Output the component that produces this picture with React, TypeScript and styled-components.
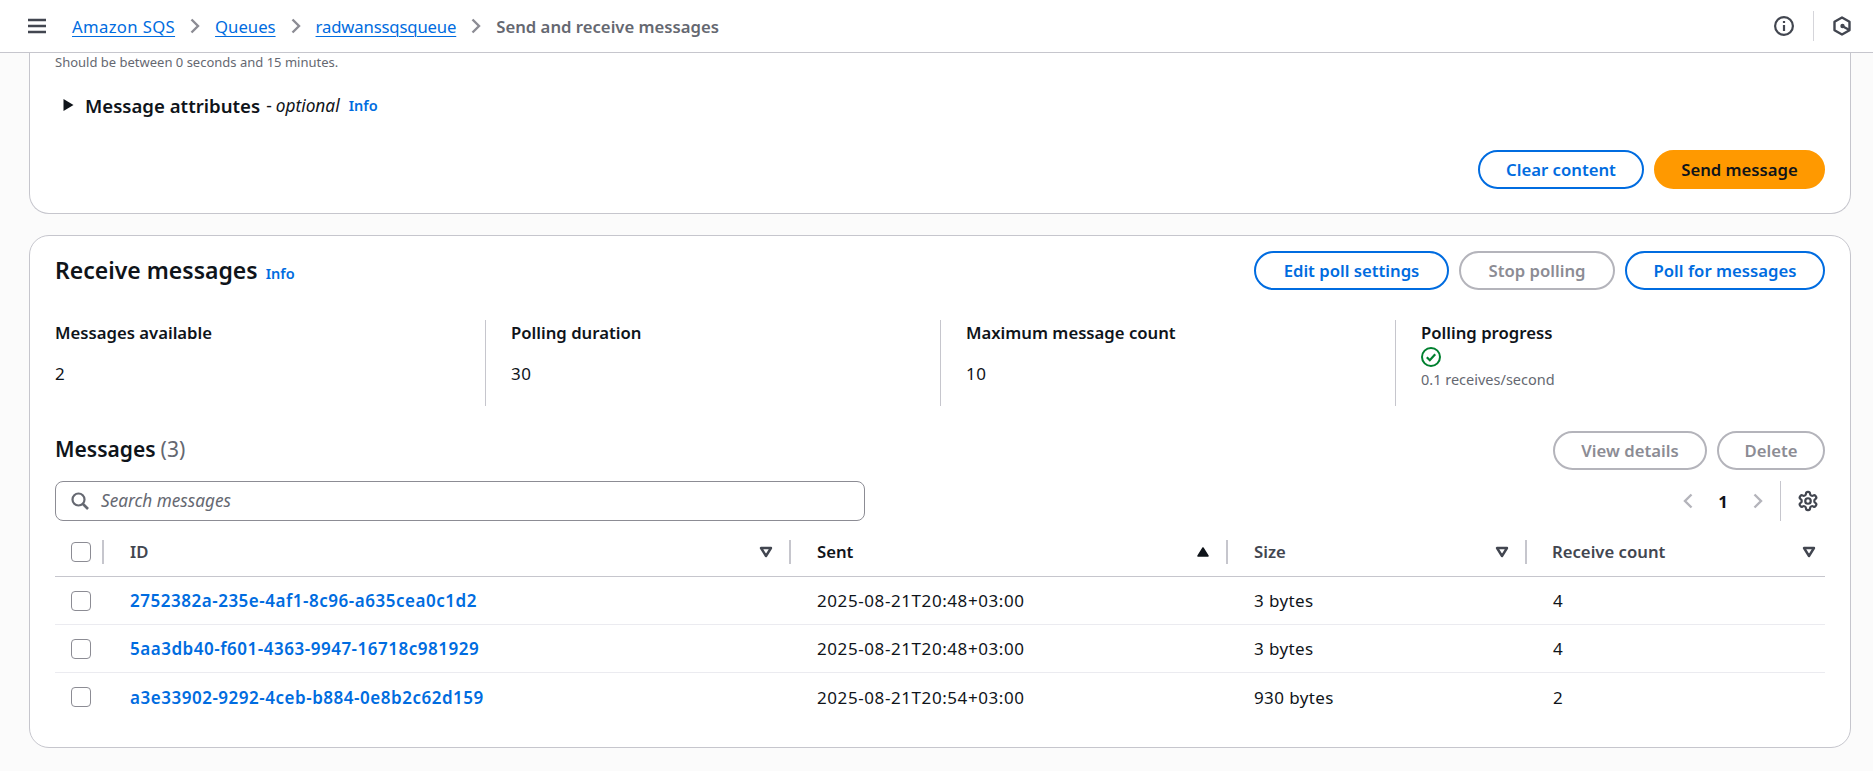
import React from "react";
import styled, { createGlobalStyle } from "styled-components";

const Global = createGlobalStyle`
  html, body { margin: 0; padding: 0; height: 771px; overflow: hidden; background: #fbfbfb; }
  body { font-family: "Noto Sans", "Open Sans", sans-serif; font-size: 16.7px; color: #0f141a; }
  * { box-sizing: border-box; }
`;

const Page = styled.div`
  width: 1873px;
  height: 771px;
  overflow: hidden;
  display: flex;
  flex-direction: column;
`;
const Header = styled.header`
  height: 53px;
  flex: none;
  background: #fff;
  border-bottom: 1px solid #c6c6cd;
  display: flex;
  align-items: center;
  padding: 0 21px 0 28px;
`;
const Crumbs = styled.nav`
  display: flex;
  align-items: center;
  margin-left: 26px;
  flex: 1;
  font-size: 16.7px;
`;
const CrumbLink = styled.a<{ $spacing?: number }>`
  color: #006ce0;
  text-decoration: underline;
  text-underline-offset: 3px;
  text-decoration-thickness: 1px;
  letter-spacing: ${(p) => p.$spacing ?? 0}px;
`;
const CrumbCurrent = styled.span`
  color: #656871;
  font-weight: 600;
`;
const CrumbSep = styled.span`
  display: inline-flex;
  width: 40px;
  justify-content: center;
`;
const HeaderIcons = styled.div`
  display: flex;
  align-items: center;
`;
const HeaderDivider = styled.div`
  width: 1px;
  height: 30px;
  background: #d5d5da;
  margin: 0 18px 0 19px;
`;
const Main = styled.main`
  padding: 0 22px 0 29px;
  display: flex;
  flex-direction: column;
  gap: 21px;
`;
const TopPanel = styled.section`
  height: 161px;
  background: #fff;
  border: 1px solid #c6c6cd;
  border-top: none;
  border-radius: 0 0 20px 20px;
  padding: 0 25px;
  display: flex;
  flex-direction: column;
`;
const Hint = styled.div`
  font-size: 13px;
  line-height: 18px;
  color: #656871;
`;
const Expander = styled.div`
  margin-top: 22px;
  padding-left: 7px;
  display: flex;
  align-items: center;
  height: 24px;
  font-size: 18.6px;
  font-weight: 600;
`;
const ExpanderLabel = styled.span`
  margin-left: 10px;
`;
const Optional = styled.span`
  font-size: 17.3px;
  font-weight: 400;
  margin-left: 6px;
`;
const OptionalWord = styled.i`
  margin-left: 4px;
`;
const InfoLink = styled.a`
  color: #006ce0;
  font-size: 14.5px;
  font-weight: 600;
  margin-left: 9px;
`;
const TitleInfo = styled(InfoLink)`
  margin-left: 8px;
`;
const ActionsEnd = styled.div`
  margin-top: auto;
  margin-bottom: 24px;
  display: flex;
  justify-content: flex-end;
  gap: 10px;
`;
const Pill = styled.button<{ $w: number; $variant?: "normal" | "primary" | "disabled" }>`
  width: ${(p) => p.$w}px;
  height: 39px;
  padding: 0;
  border-radius: 20px;
  font-family: inherit;
  font-size: 16.7px;
  font-weight: 600;
  background: ${(p) => (p.$variant === "primary" ? "#ff9900" : "#fff")};
  border: 2px solid
    ${(p) =>
      p.$variant === "primary" ? "#ff9900" : p.$variant === "disabled" ? "#b4b4bb" : "#006ce0"};
  color: ${(p) =>
    p.$variant === "primary" ? "#0f141a" : p.$variant === "disabled" ? "#8c8c94" : "#006ce0"};
`;
const Panel = styled.section`
  height: 513px;
  background: #fff;
  border: 1px solid #c6c6cd;
  border-radius: 20px;
  padding: 15px 25px 0;
  display: flex;
  flex-direction: column;
`;
const PanelHead = styled.div`
  display: flex;
  align-items: center;
  justify-content: space-between;
`;
const TitleRow = styled.div`
  display: flex;
  align-items: baseline;
  margin-bottom: 2px;
`;
const Title = styled.h2`
  margin: 0;
  font-size: 23px;
  line-height: 30px;
  font-weight: 600;
`;
const SubTitle = styled.h3`
  margin: 0 0 4px;
  font-size: 21px;
  line-height: 30px;
  font-weight: 600;
`;
const Count = styled.span`
  font-weight: 400;
  color: #656871;
  margin-left: 5px;
`;
const Actions = styled.div`
  display: flex;
  gap: 10px;
`;
const Stats = styled.div`
  margin-top: 30px;
  height: 86px;
  display: grid;
  grid-template-columns: 430px 455px 455px 1fr;
`;
const Stat = styled.div<{ $first?: boolean }>`
  padding-top: 1px;
  padding-left: ${(p) => (p.$first ? 0 : 25)}px;
  border-left: ${(p) => (p.$first ? "none" : "1px solid #c6c6cd")};
`;
const StatLabel = styled.div`
  font-weight: 600;
  font-size: 16.7px;
  line-height: 24px;
`;
const StatValue = styled.div`
  margin-top: 17px;
  line-height: 24px;
  font-size: 17px;
  letter-spacing: 0.5px;
`;
const StatusIcon = styled.div`
  height: 24px;
  display: flex;
  align-items: center;
`;
const StatHint = styled.div`
  font-size: 14.5px;
  line-height: 20px;
  color: #656871;
`;
const MessagesHead = styled(PanelHead)`
  margin-top: 25px;
`;
const Tools = styled.div`
  margin-top: 11px;
  display: flex;
  justify-content: space-between;
  align-items: center;
  height: 40px;
`;
const Search = styled.div`
  width: 810px;
  height: 40px;
  border: 1px solid #8c8c94;
  border-radius: 8px;
  display: flex;
  align-items: center;
  padding-left: 15px;
  gap: 12px;
`;
const Placeholder = styled.i`
  color: #656871;
  font-size: 17.2px;
  padding-bottom: 2px;
`;
const Pager = styled.div`
  display: flex;
  align-items: center;
  height: 40px;
  margin-right: 6px;
`;
const PageNum = styled.span`
  font-weight: 700;
  font-size: 16.7px;
  width: 54px;
  text-align: center;
`;
const PagerDivider = styled.div`
  width: 1px;
  height: 40px;
  background: #c6c6cd;
  margin: 0 16px 0 14px;
`;
const Row = styled.div<{ $last?: boolean }>`
  display: grid;
  grid-template-columns: 49px 687px 437px 299px 298px;
  align-items: center;
  height: 48px;
  border-bottom: ${(p) => (p.$last ? "none" : "1px solid #ebebf0")};
`;
const HeadRow = styled(Row)`
  margin-top: 9px;
  height: 47px;
  padding-bottom: 3px;
  border-bottom: 1px solid #c6c6cd;
`;
const CheckCell = styled.div`
  padding-left: 16px;
  display: flex;
  align-items: center;
`;
const Check = styled.span`
  width: 20px;
  height: 20px;
  border: 1px solid #8c8c94;
  border-radius: 4px;
  background: #fff;
`;
const HeadCheckCell = styled(CheckCell)`
  height: 24px;
  border-right: 2px solid #c6c6cd;
`;
const HeadCell = styled.div<{ $active?: boolean; $noDivider?: boolean }>`
  height: 24px;
  display: flex;
  align-items: center;
  justify-content: space-between;
  padding-left: ${(p) => (p.$noDivider ? 25 : 26)}px;
  padding-right: ${(p) => (p.$noDivider ? 9 : 16)}px;
  font-weight: 600;
  font-size: 16.7px;
  color: ${(p) => (p.$active ? "#0f141a" : "#424650")};
  border-right: ${(p) => (p.$noDivider ? "none" : "2px solid #c6c6cd")};
`;
const Cell = styled.div<{ $spacing?: number }>`
  padding-left: 26px;
  font-size: 17px;
  letter-spacing: ${(p) => p.$spacing ?? 0}px;
`;
const IdLink = styled.a`
  color: #006ce0;
  font-weight: 600;
  font-size: 17px;
  letter-spacing: 0.52px;
`;

const Chevron = ({ dir, color }: { dir: "l" | "r"; color: string }) => (
  <svg width="16" height="16" viewBox="0 0 16 16" fill="none" stroke={color} strokeWidth="2.4">
    <path d={dir === "r" ? "M4.5 1.5L11 8l-6.5 6.5" : "M11.5 1.5L5 8l6.5 6.5"} />
  </svg>
);
const SortDown = () => (
  <svg width="14" height="12" viewBox="0 0 14 12" fill="none" stroke="#424650" strokeWidth="2.4" strokeLinejoin="round">
    <path d="M2 2h10L7 10z" />
  </svg>
);
const SortUp = () => (
  <svg width="14" height="12" viewBox="0 0 14 12" fill="#0f141a" stroke="#0f141a" strokeWidth="1.5" strokeLinejoin="round">
    <path d="M2 10h10L7 2z" />
  </svg>
);

const rows = [
  ["2752382a-235e-4af1-8c96-a635cea0c1d2", "2025-08-21T20:48+03:00", "3 bytes", "4"],
  ["5aa3db40-f601-4363-9947-16718c981929", "2025-08-21T20:48+03:00", "3 bytes", "4"],
  ["a3e33902-9292-4ceb-b884-0e8b2c62d159", "2025-08-21T20:54+03:00", "930 bytes", "2"],
];

export default function App() {
  return (
    <Page>
      <Global />
      <Header>
        <svg width="18" height="16" viewBox="0 0 18 16" stroke="#424650" strokeWidth="2.4">
          <path d="M0 2h18M0 8h18M0 14h18" />
        </svg>
        <Crumbs>
          <CrumbLink $spacing={0.35}>Amazon SQS</CrumbLink>
          <CrumbSep><Chevron dir="r" color="#8c8c94" /></CrumbSep>
          <CrumbLink>Queues</CrumbLink>
          <CrumbSep><Chevron dir="r" color="#8c8c94" /></CrumbSep>
          <CrumbLink $spacing={-0.15}>radwanssqsqueue</CrumbLink>
          <CrumbSep><Chevron dir="r" color="#8c8c94" /></CrumbSep>
          <CrumbCurrent>Send and receive messages</CrumbCurrent>
        </Crumbs>
        <HeaderIcons>
          <svg width="20" height="20" viewBox="0 0 20 20" fill="none" stroke="#424650" strokeWidth="2.2">
            <circle cx="10" cy="10" r="8.9" />
            <path d="M10 9v6" strokeWidth="2.2" />
            <path d="M10 5v2" strokeWidth="2.2" />
          </svg>
          <HeaderDivider />
          <svg width="20" height="20" viewBox="0 0 20 20" fill="none" stroke="#424650" strokeWidth="2.4" strokeLinejoin="round">
            <path d="M10 1.5l7.5 4.2v8.6L10 18.5l-7.5-4.2V5.7z" />
            <path d="M10 10l7 3.8" />
            <circle cx="10.5" cy="10" r="2.2" fill="#424650" stroke="none" />
          </svg>
        </HeaderIcons>
      </Header>
      <Main>
        <TopPanel>
          <Hint>Should be between 0 seconds and 15 minutes.</Hint>
          <Expander>
            <svg width="13" height="16" viewBox="0 0 13 16" fill="#0f141a"><path d="M1.5 2l10 6-10 6z" /></svg>
            <ExpanderLabel>Message attributes</ExpanderLabel>
            <Optional>-<OptionalWord>optional</OptionalWord></Optional>
            <InfoLink>Info</InfoLink>
          </Expander>
          <ActionsEnd>
            <Pill $w={166}>Clear content</Pill>
            <Pill $w={171} $variant="primary">Send message</Pill>
          </ActionsEnd>
        </TopPanel>
        <Panel>
          <PanelHead>
            <TitleRow>
              <Title>Receive messages</Title>
              <TitleInfo>Info</TitleInfo>
            </TitleRow>
            <Actions>
              <Pill $w={195}>Edit poll settings</Pill>
              <Pill $w={156} $variant="disabled">Stop polling</Pill>
              <Pill $w={200}>Poll for messages</Pill>
            </Actions>
          </PanelHead>
          <Stats>
            <Stat $first>
              <StatLabel>Messages available</StatLabel>
              <StatValue>2</StatValue>
            </Stat>
            <Stat>
              <StatLabel>Polling duration</StatLabel>
              <StatValue>30</StatValue>
            </Stat>
            <Stat>
              <StatLabel>Maximum message count</StatLabel>
              <StatValue>10</StatValue>
            </Stat>
            <Stat>
              <StatLabel>Polling progress</StatLabel>
              <StatusIcon>
                <svg width="20" height="20" viewBox="0 0 20 20" fill="none" stroke="#00802f" strokeWidth="2">
                  <circle cx="10" cy="10" r="9" />
                  <path d="M5.8 10.2l3 3 5.4-6" strokeWidth="2.2" />
                </svg>
              </StatusIcon>
              <StatHint>0.1 receives/second</StatHint>
            </Stat>
          </Stats>
          <MessagesHead>
            <SubTitle>Messages<Count>(3)</Count></SubTitle>
            <Actions>
              <Pill $w={154} $variant="disabled">View details</Pill>
              <Pill $w={108} $variant="disabled">Delete</Pill>
            </Actions>
          </MessagesHead>
          <Tools>
            <Search>
              <svg width="18" height="18" viewBox="0 0 18 18" fill="none" stroke="#656871" strokeWidth="2.2">
                <circle cx="7.5" cy="7.5" r="6" />
                <path d="M12 12l5 5" strokeWidth="2.6" />
              </svg>
              <Placeholder>Search messages</Placeholder>
            </Search>
            <Pager>
              <Chevron dir="l" color="#b4b4bb" />
              <PageNum>1</PageNum>
              <Chevron dir="r" color="#b4b4bb" />
              <PagerDivider />
              <svg width="22" height="22" viewBox="0 0 24 24" fill="none" stroke="#424650" strokeWidth="2.4" strokeLinecap="round" strokeLinejoin="round">
                <path d="M12.22 2h-.44a2 2 0 0 0-2 2v.18a2 2 0 0 1-1 1.73l-.43.25a2 2 0 0 1-2 0l-.15-.08a2 2 0 0 0-2.73.73l-.22.38a2 2 0 0 0 .73 2.73l.15.1a2 2 0 0 1 1 1.72v.51a2 2 0 0 1-1 1.74l-.15.09a2 2 0 0 0-.73 2.73l.22.38a2 2 0 0 0 2.73.73l.15-.08a2 2 0 0 1 2 0l.43.25a2 2 0 0 1 1 1.73V20a2 2 0 0 0 2 2h.44a2 2 0 0 0 2-2v-.18a2 2 0 0 1 1-1.73l.43-.25a2 2 0 0 1 2 0l.15.08a2 2 0 0 0 2.73-.73l.22-.39a2 2 0 0 0-.73-2.73l-.15-.08a2 2 0 0 1-1-1.74v-.5a2 2 0 0 1 1-1.74l.15-.09a2 2 0 0 0 .73-2.73l-.22-.38a2 2 0 0 0-2.73-.73l-.15.08a2 2 0 0 1-2 0l-.43-.25a2 2 0 0 1-1-1.73V4a2 2 0 0 0-2-2z" />
                <circle cx="12" cy="12" r="3" />
              </svg>
            </Pager>
          </Tools>
          <HeadRow>
            <HeadCheckCell><Check /></HeadCheckCell>
            <HeadCell>ID<SortDown /></HeadCell>
            <HeadCell $active>Sent<SortUp /></HeadCell>
            <HeadCell>Size<SortDown /></HeadCell>
            <HeadCell $noDivider>Receive count<SortDown /></HeadCell>
          </HeadRow>
          {rows.map((r, i) => (
            <Row key={r[0]} $last={i === rows.length - 1}>
              <CheckCell><Check /></CheckCell>
              <Cell><IdLink>{r[0]}</IdLink></Cell>
              <Cell $spacing={0.58}>{r[1]}</Cell>
              <Cell $spacing={0.4}>{r[2]}</Cell>
              <Cell>{r[3]}</Cell>
            </Row>
          ))}
        </Panel>
      </Main>
    </Page>
  );
}
